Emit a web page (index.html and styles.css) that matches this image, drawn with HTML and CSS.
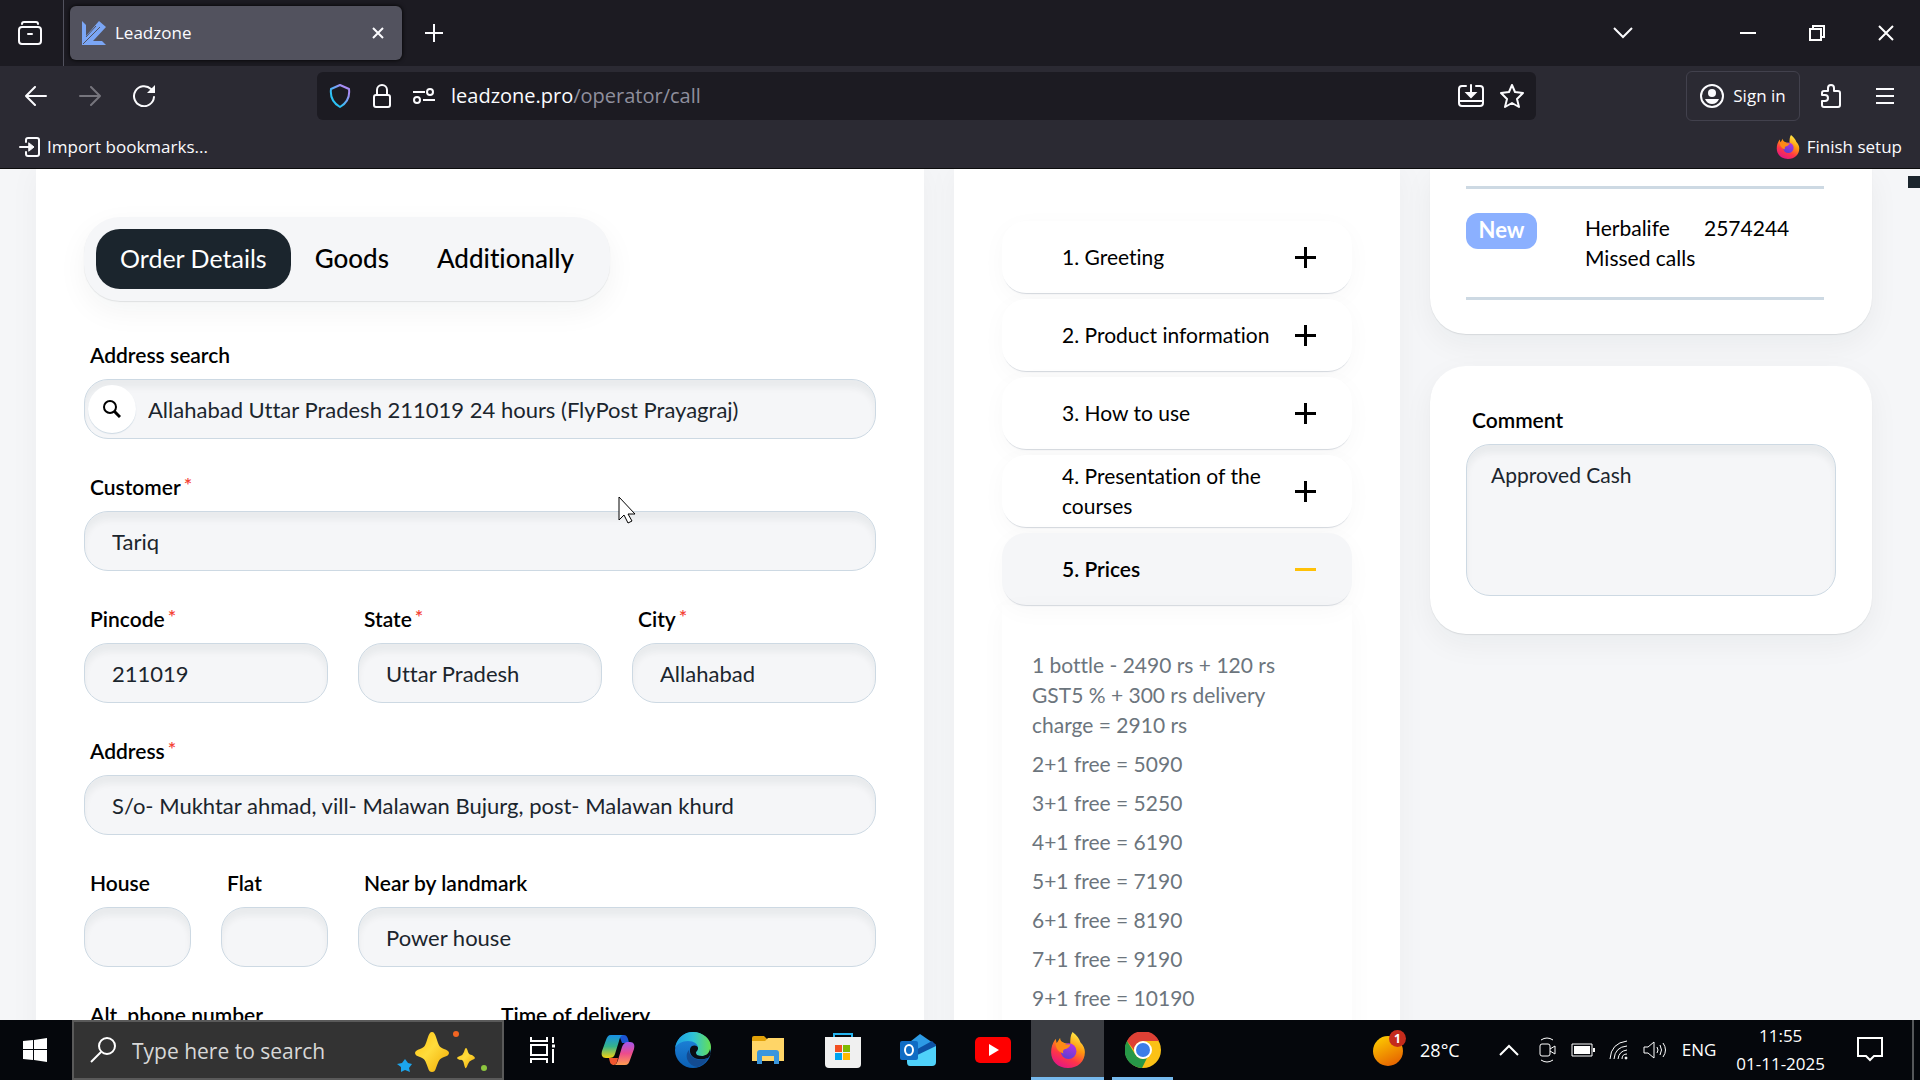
FILE: index.html
```html
<!DOCTYPE html>
<html lang="en">
<head>
    <meta charset="UTF-8">
    <meta name="viewport" content="width=device-width, initial-scale=1.0">
    <title>Leadzone</title>
    <link rel="stylesheet" href="styles.css">
</head>
<body>
    <!-- gradients shared by the two firefox logos -->
    <svg class="defs" width="0" height="0">
        <defs>
            <linearGradient id="foxBody" x1="0.8" y1="0" x2="0.3" y2="1">
                <stop offset="0" stop-color="#fff44f"/>
                <stop offset="0.4" stop-color="#ff980e"/>
                <stop offset="0.7" stop-color="#ff3647"/>
                <stop offset="1" stop-color="#e31587"/>
            </linearGradient>
            <linearGradient id="foxGlobe" x1="0.7" y1="0" x2="0.3" y2="1">
                <stop offset="0" stop-color="#b833e1"/>
                <stop offset="1" stop-color="#5b3fd0"/>
            </linearGradient>
            <symbol id="firefox" viewBox="0 0 32 32">
                <path fill="url(#foxBody)" d="M20 0c4 3 6 6 7 9 3 3 4 6 4 9 0 8-6 14-15 14S1 26 1 18c0-4 1-8 4-12l1 4 3-5c0 3 2 4 5 5l4 1c0-4 0-8 2-11z"/>
                <circle cx="16.500" cy="17" r="7" fill="url(#foxGlobe)"/>
                <path fill="#ff8a16" d="M5 10c4-2 7-1 9 1h4c0 2-2 3-4 4-2 0-3 2-2 4-4-1-7-4-7-9z"/>
            </symbol>
        </defs>
    </svg>

    <header class="browser">
        <div class="tab-strip">
            <button class="tab-button first" aria-label="Recent browsing">
                <svg width="24" height="26" viewBox="0 0 24 26" fill="none" stroke="#fbfbfe" stroke-width="2" stroke-linecap="round"><path d="M4 4c0-2 1-2 2-2h12c1 0 2 0 2 2"/><rect x="1" y="7" width="22" height="17" rx="3"/><path d="M10 14h4"/></svg>
            </button>
            <div class="tab">
                <svg width="24" height="26" viewBox="0 0 24 26"><path fill="#7ba6f5" d="M0 1l4 4v11L17 1l7 6-13 14h9l4 4H0z"/><path d="M1 24L18 7M4 17l10-11" stroke="#52525e" stroke-width="1" fill="none"/></svg>
                <span class="tab-title">Leadzone</span>
                <button class="tab-close" aria-label="Close tab">
                    <svg width="12" height="12" viewBox="0 0 12 12" stroke="#fbfbfe" stroke-width="2"><path d="M1 1l10 10M11 1L1 11"/></svg>
                </button>
            </div>
            <button class="tab-button plus" aria-label="New tab">
                <svg width="18" height="18" viewBox="0 0 18 18" stroke="#fbfbfe" stroke-width="2"><path d="M9 0v18M0 9h18"/></svg>
            </button>
            <div class="window-buttons">
                <button class="all-tabs" aria-label="List all tabs"><svg width="20" height="12" viewBox="0 0 20 12" fill="none" stroke="#fbfbfe" stroke-width="2"><path d="M1 1l9 9 9-9"/></svg></button>
                <button aria-label="Minimize"><svg width="16" height="16" viewBox="0 0 16 16"><path d="M0 8h16" stroke="#fff" stroke-width="2"/></svg></button>
                <button aria-label="Restore"><svg width="16" height="16" viewBox="0 0 16 16" fill="none" stroke="#fff" stroke-width="2"><path d="M1 4h11v11H1z"/><path d="M4 4V1h11v11h-3"/></svg></button>
                <button aria-label="Close"><svg width="16" height="16" viewBox="0 0 16 16" stroke="#fff" stroke-width="2"><path d="M1 1l14 14M15 1L1 15"/></svg></button>
            </div>
        </div>

        <div class="toolbar">
            <button aria-label="Back"><svg width="22" height="20" viewBox="0 0 22 20" fill="none" stroke="#fbfbfe" stroke-width="2" stroke-linecap="round" stroke-linejoin="round"><path d="M21 10H1M10 1l-9 9 9 9"/></svg></button>
            <button aria-label="Forward" disabled><svg width="22" height="20" viewBox="0 0 22 20" fill="none" stroke="#76757d" stroke-width="2" stroke-linecap="round" stroke-linejoin="round"><path d="M1 10h20M12 1l9 9-9 9"/></svg></button>
            <button aria-label="Reload"><svg width="22" height="22" viewBox="0 0 22 22"><path d="M18 4a10 10 0 1 0 3 8" fill="none" stroke="#fbfbfe" stroke-width="2" stroke-linecap="round"/><path d="M22 0v8h-8z" fill="#fbfbfe"/></svg></button>
            <div class="url-bar">
                <div class="site-info">
                    <svg width="22" height="24" viewBox="0 0 22 24" fill="none" stroke-width="2" stroke-linejoin="round"><defs><linearGradient id="shield" x1="1" y1="0" x2="0" y2="1"><stop offset="0.200" stop-color="#a98cf5"/><stop offset="0.700" stop-color="#2bc2f5"/></linearGradient></defs><path stroke="url(#shield)" d="M11 1l9 4c1 8-2 14-9 18C4 19 1 13 2 5z"/></svg>
                    <svg width="18" height="24" viewBox="0 0 18 24" fill="none" stroke="#fbfbfe" stroke-width="2"><rect x="1" y="11" width="16" height="12" rx="2"/><path d="M4 11V6a5 5 0 0 1 10 0v5"/></svg>
                    <svg width="22" height="16" viewBox="0 0 22 16" fill="none" stroke="#fbfbfe" stroke-width="2"><path d="M0 4h12M10 12h12"/><circle cx="17" cy="4" r="3"/><circle cx="4" cy="12" r="3"/></svg>
                </div>
                <p class="url">leadzone.pro<span>/operator/call</span></p>
                <svg width="26" height="24" viewBox="0 0 26 24" fill="none" stroke="#fbfbfe" stroke-width="2" stroke-linecap="round"><path d="M8 2H4a3 3 0 0 0-3 3v14a3 3 0 0 0 3 3h18a3 3 0 0 0 3-3V5a3 3 0 0 0-3-3h-4M1 17h24M13 1v11"/><path d="M9 9h8l-4 4z" fill="#fbfbfe"/></svg>
                <svg width="24" height="24" viewBox="0 0 24 24" fill="none" stroke="#fbfbfe" stroke-width="2" stroke-linejoin="round"><path d="M12 1l3 7 8 1-6 6 2 8-7-4-7 4 2-8-6-6 8-1z"/></svg>
            </div>
            <button class="sign-in">
                <svg width="24" height="24" viewBox="0 0 24 24"><circle cx="12" cy="12" r="11" fill="none" stroke="#fbfbfe" stroke-width="2"/><circle cx="12" cy="9" r="4" fill="#fbfbfe"/><path d="M5 15h14c-1 3-4 5-7 5s-6-2-7-5z" fill="#fbfbfe"/></svg>
                Sign in
            </button>
            <button aria-label="Extensions"><svg width="20" height="24" viewBox="0 0 20 24" fill="none" stroke="#fbfbfe" stroke-width="2" stroke-linejoin="round"><path d="M3 7h4V4a3 3 0 0 1 6 0v3h4q2 0 2 2v12q0 2-2 2H3q-2 0-2-2v-4h3a3 3 0 0 0 0-6H1V9q0-2 2-2z"/></svg></button>
            <button aria-label="Menu"><svg width="18" height="16" viewBox="0 0 18 16" stroke="#fbfbfe" stroke-width="2"><path d="M0 1h18M0 8h18M0 15h18"/></svg></button>
        </div>

        <div class="bookmarks">
            <button>
                <svg width="21" height="20" viewBox="0 0 21 20" fill="none" stroke="#fbfbfe" stroke-width="2" stroke-linecap="round"><path d="M7 5V3q0-2 2-2h9q2 0 2 2v14q0 2-2 2H9q-2 0-2-2v-2M1 10h12"/><path d="M10 6l5 4-5 4z" fill="#fbfbfe" stroke-width="1"/></svg>
                Import bookmarks...
            </button>
            <button>
                <svg width="24" height="24"><use href="#firefox"/></svg>
                Finish setup
            </button>
        </div>
    </header>

    <main class="page">
        <section class="panel order">
            <nav class="tabs">
                <button class="active">Order Details</button>
                <button>Goods</button>
                <button>Additionally</button>
            </nav>
            <form class="order-form">
                <div class="field full">
                    <label for="search">Address search</label>
                    <div class="search-box">
                        <button type="button" class="search-button" aria-label="Search">
                            <svg width="18" height="18" viewBox="0 0 18 18" fill="none" stroke="#000" stroke-width="2"><circle cx="7" cy="7" r="6"/><path d="M11 11l6 6" stroke-width="3"/></svg>
                        </button>
                        <input type="text" id="search" value="Allahabad Uttar Pradesh 211019 24 hours (FlyPost Prayagraj)">
                    </div>
                </div>
                <div class="field full">
                    <label for="customer">Customer<sup>*</sup></label>
                    <input type="text" id="customer" value="Tariq">
                </div>
                <div class="field third">
                    <label for="pincode">Pincode<sup>*</sup></label>
                    <input type="text" id="pincode" value="211019">
                </div>
                <div class="field third">
                    <label for="state">State<sup>*</sup></label>
                    <input type="text" id="state" value="Uttar Pradesh">
                </div>
                <div class="field third">
                    <label for="city">City<sup>*</sup></label>
                    <input type="text" id="city" value="Allahabad">
                </div>
                <div class="field full">
                    <label for="address">Address<sup>*</sup></label>
                    <input type="text" id="address" value="S/o- Mukhtar ahmad, vill- Malawan Bujurg, post- Malawan khurd">
                </div>
                <div class="field sixth">
                    <label for="house">House</label>
                    <input type="text" id="house">
                </div>
                <div class="field sixth">
                    <label for="flat">Flat</label>
                    <input type="text" id="flat">
                </div>
                <div class="field wide">
                    <label for="landmark">Near by landmark</label>
                    <input type="text" id="landmark" value="Power house">
                </div>
                <div class="field half">
                    <label for="phone">Alt. phone number</label>
                    <input type="text" id="phone">
                </div>
                <div class="field half">
                    <label for="time">Time of delivery</label>
                    <input type="text" id="time">
                </div>
            </form>
        </section>

        <section class="panel script">
            <button class="step">1. Greeting <i class="plus-icon"></i></button>
            <button class="step">2. Product information <i class="plus-icon"></i></button>
            <button class="step">3. How to use <i class="plus-icon"></i></button>
            <button class="step">4. Presentation of the courses <i class="plus-icon"></i></button>
            <button class="step open">5. Prices <i class="plus-icon minus"></i></button>
            <div class="step-body">
                <p>1 bottle - 2490 rs + 120 rs GST5 % + 300 rs delivery charge = 2910 rs</p>
                <p>2+1 free = 5090</p>
                <p>3+1 free = 5250</p>
                <p>4+1 free = 6190</p>
                <p>5+1 free = 7190</p>
                <p>6+1 free = 8190</p>
                <p>7+1 free = 9190</p>
                <p>9+1 free = 10190</p>
            </div>
        </section>

        <aside class="side">
            <div class="card history">
                <div class="history-row">
                    <span class="badge">New</span>
                    <p>Herbalife</p>
                    <p>2574244</p>
                    <p class="status">Missed calls</p>
                </div>
            </div>
            <div class="card comment">
                <label for="comment">Comment</label>
                <textarea id="comment">Approved Cash</textarea>
            </div>
        </aside>

        <div class="scroll-mark"></div>
        <svg class="cursor" width="18" height="28" viewBox="0 0 18 28"><path d="M1 1v23l5-5 4 8 4-2-4-7h7z" fill="#fff" stroke="#000"/></svg>
    </main>

    <footer class="taskbar">
        <button class="start" aria-label="Start"><svg width="24" height="24" viewBox="0 0 24 24" fill="#fff"><path d="M0 3l10-1v9H0zM11 2l13-2v11H11zM0 12h10v10L0 21zM11 12h13v12l-13-2z"/></svg></button>
        <div class="task-search">
            <svg width="26" height="26" viewBox="0 0 26 26" fill="none" stroke="#fff" stroke-width="2"><circle cx="17" cy="9" r="8"/><path d="M11 15L1 25"/></svg>
            <input type="text" placeholder="Type here to search" aria-label="Type here to search">
            <svg width="92" height="44" viewBox="0 0 92 44">
                <defs><linearGradient id="spark" x1="0" y1="0" x2="1" y2="1"><stop offset="0" stop-color="#ffc20e"/><stop offset="0.450" stop-color="#ffdc3c"/><stop offset="1" stop-color="#f0a800"/></linearGradient></defs>
                <path fill="url(#spark)" d="M36 4c2 0 3 2 4 5 3 9 3 10 8 12 3 1 5 2 5 4s-2 3-5 4c-5 2-5 3-8 11-1 3-2 4-4 4s-3-1-4-4c-3-8-3-9-8-11-3-1-5-2-5-4s2-3 5-4c5-2 5-3 8-12 1-3 2-5 4-5z"/>
                <path fill="url(#spark)" d="M70 20q1 0 2 4 1 3 4 3 3 2 3 3t-3 2q-3 1-4 4t-2 4-2-4-4-4q-3-1-3-2t3-2q3-1 4-4 1-4 2-4z"/>
                <path fill="#1ca5ec" d="M9 31l3 4 4 1-3 4 1 4-5-2-4 2v-5l-4-3 5-1z"/>
                <circle cx="60" cy="6" r="3" fill="#f26522"/><circle cx="88" cy="40" r="3" fill="#8dc63f"/>
            </svg>
        </div>
        <button aria-label="Task view"><svg width="26" height="26" viewBox="0 0 26 26" fill="none" stroke="#fff" stroke-width="2"><path d="M1 0v4h16V0M1 8h16v10H1zM1 26v-4h16v4M23 0v6M23 12v14"/><path d="M22 9h3" stroke-width="3"/></svg></button>
        <button aria-label="Copilot"><svg width="34" height="32" viewBox="0 0 34 32">
            <defs><linearGradient id="copA" x1="0" y1="0" x2="0" y2="1"><stop offset="0" stop-color="#1890e8"/><stop offset="0.500" stop-color="#35b48b"/><stop offset="1" stop-color="#f5d211"/></linearGradient><linearGradient id="copB" x1="0" y1="0" x2="0" y2="1"><stop offset="0" stop-color="#a456ee"/><stop offset="0.500" stop-color="#ed4c8c"/><stop offset="1" stop-color="#ff9d50"/></linearGradient></defs>
            <path fill="#1b55d3" d="M18 1h5c3 0 4 3 5 8h-7z"/>
            <path fill="url(#copA)" d="M10 1h13c-3 0-4 2-5 6l-4 13c-1 3-3 4-6 4H5c-4 0-5-3-4-7L5 6c1-3 2-5 5-5z"/>
            <path fill="url(#copB)" d="M24 31H12c3 0 4-2 5-5l4-13c1-3 3-5 6-5h2c4 0 5 3 4 7l-4 11c-1 3-2 5-5 5z"/>
            <path fill="#f2562f" d="M9 24h8c-1 5-2 7-5 7-3-1-3-3-4-7z"/></svg></button>
        <button aria-label="Edge"><svg width="36" height="36" viewBox="0 0 36 36">
            <defs><linearGradient id="edgeA" x1="0" y1="0" x2="1" y2="0"><stop offset="0" stop-color="#1b9de2"/><stop offset="0.500" stop-color="#2fc1d8"/><stop offset="1" stop-color="#66e052"/></linearGradient><linearGradient id="edgeB" x1="0" y1="0" x2="0" y2="1"><stop offset="0" stop-color="#2089df"/><stop offset="1" stop-color="#0b5fb4"/></linearGradient></defs>
            <circle cx="18" cy="18" r="18" fill="url(#edgeB)"/>
            <path fill="url(#edgeA)" d="M0 16C2 6 9 0 18 0c10 0 18 7 18 15 0 6-4 9-9 9-4 0-6-1-6-3s2-2 2-5c0-4-4-7-10-7S2 12 0 16z"/>
            <path fill="#0a0d14" d="M15 17c-1 7 6 13 18 9l3-4-1-5c-1 5-5 7-8 7-4 0-6-1-6-3s2-2 2-5c0-3-7-4-8 1z"/>
            <path fill="#134b91" d="M14 18c-5 5-2 16 9 17 5-2 8-5 10-9-10 4-19 0-19-8z"/></svg></button>
        <button aria-label="File Explorer"><svg width="32" height="28" viewBox="0 0 32 28"><path fill="#e2a109" d="M0 2q0-2 2-2h10l3 3v4H0z"/><path fill="#ffd567" d="M0 5h13l3-3h16v23H0z"/><path fill="#3a96dd" d="M5 28V17q0-3 3-3h16q3 0 3 3v11h-5v-8H10v8z"/></svg></button>
        <button aria-label="Microsoft Store"><svg width="36" height="36" viewBox="0 0 36 36"><path d="M9 7V2h18v5" fill="none" stroke="#25b5f0" stroke-width="2"/><path fill="#f0f0f0" d="M0 5h36v27q0 4-4 4H4q-4 0-4-4z"/><path fill="#f25022" d="M10 13h7v7h-7z"/><path fill="#7fba00" d="M18 13h7v7h-7z"/><path fill="#00a4ef" d="M10 21h7v7h-7z"/><path fill="#ffb900" d="M18 21h7v7h-7z"/></svg></button>
        <button aria-label="Outlook"><svg width="36" height="32" viewBox="0 0 36 32"><path fill="#2d9be5" d="M6 11L20 0l16 11v9H6z"/><path fill="#0d52a5" d="M12 18L32 7l4 4v4L18 26z"/><path fill="#4fd1fa" d="M7 26l29-14v16q0 4-4 4H10q-3 0-3-4z"/><rect y="7" width="18" height="19" rx="2" fill="#0f6cc4"/><ellipse cx="9" cy="16" rx="4" ry="5" fill="none" stroke="#fff" stroke-width="2"/></svg></button>
        <button aria-label="YouTube"><svg width="36" height="26" viewBox="0 0 36 26"><rect width="36" height="26" rx="5" fill="#f00"/><path fill="#fff" d="M14 7l10 6-10 6z"/></svg></button>
        <button class="current" aria-label="Firefox"><svg width="36" height="36"><use href="#firefox"/></svg></button>
        <button class="running" aria-label="Chrome"><svg width="36" height="36" viewBox="0 0 36 36"><circle cx="18" cy="18" r="18" fill="#fbc116"/><path fill="#dd4035" d="M2 9a18 18 0 0 1 32 0H18a9 9 0 0 0-9 9z"/><path fill="#279847" d="M2 9l8 13a9 9 0 0 0 12 4l-5 10A18 18 0 0 1 2 9z"/><circle cx="18" cy="18" r="9" fill="#fff"/><circle cx="18" cy="18" r="7" fill="#3c7de8"/></svg></button>

        <div class="tray">
            <span class="weather"><svg width="34" height="34" viewBox="0 0 34 34"><defs><linearGradient id="sun" x1="0" y1="0" x2="0.500" y2="1"><stop offset="0" stop-color="#ffd400"/><stop offset="1" stop-color="#e86a00"/></linearGradient></defs><circle cx="16" cy="18" r="15" fill="url(#sun)"/></svg><b>1</b></span>
            <span class="temp">28°C</span>
            <svg class="tray-icon more" width="20" height="12" viewBox="0 0 20 12" fill="none" stroke="#fff" stroke-width="2"><path d="M1 11l9-9 9 9"/></svg>
            <svg class="tray-icon" width="18" height="28" viewBox="0 0 18 28" fill="none" stroke="#fff"><rect x="1" y="8" width="10" height="12" rx="2"/><path d="M11 13l5-3v8l-5-3M2 4q6-4 12 0M2 24q6 4 12 0"/></svg>
            <svg class="tray-icon" width="24" height="14" viewBox="0 0 24 14"><path d="M1 1h20v12H1z" fill="none" stroke="#fff"/><path d="M3 3h16v8H3zM22 5h2v4h-2z" fill="#fff"/></svg>
            <svg class="tray-icon" width="20" height="20" viewBox="0 0 20 20" fill="none" stroke="#fff"><path d="M1 19Q2 3 18 1M5 19Q6 7 18 6M9 19q1-8 9-9M13 19q0-5 5-5"/><circle cx="17" cy="18" r="1" fill="#fff"/></svg>
            <svg class="tray-icon" width="24" height="20" viewBox="0 0 24 20" fill="none" stroke="#fff"><path d="M1 7h4l6-5v16l-6-5H1zM14 7q2 3 0 6M17 5q3 5 0 10M20 3q5 7 0 14"/></svg>
            <span class="lang">ENG</span>
            <time class="clock">11:55<br>01-11-2025</time>
            <svg class="notify" width="26" height="26" viewBox="0 0 26 26" fill="none" stroke="#fff" stroke-width="2"><path d="M1 1h24v18h-8l-4 4-4-4H1z"/></svg>
        </div>
    </footer>
</body>
</html>
```
FILE: styles.css
```css
* {
    box-sizing: border-box;
}
body {
    display: flex;
    flex-direction: column;
    margin: 0;
    height: 100vh;
    overflow: hidden;
    font-family: Lato, sans-serif;
    font-size: 21px;
    line-height: 30px;
    font-variant-ligatures: none;
    color: #000;
    background-color: #f5f6f8;
}
p {
    margin: 0;
}
button {
    display: flex;
    align-items: center;
    justify-content: center;
    padding: 0;
    border: none;
    background: none;
    color: inherit;
    font: inherit;
    font-variant-ligatures: none;
    cursor: pointer;
}
svg {
    flex-shrink: 0;
}
.defs {
    position: absolute;
}

/* browser window */
.browser {
    color: #fbfbfe;
    background-color: #2b2a33;
    border-bottom: 1px solid #0c0c0d;
    font-family: "Open Sans", sans-serif;
    font-size: 17px;
    line-height: 24px;
}
.tab-strip {
    display: flex;
    align-items: center;
    height: 66px;
    background-color: #1c1b22;
}
.tab-button.first {
    width: 64px;
    height: 66px;
    padding-right: 4px;
    border-right: 1px solid #52525e;
}
.tab {
    display: flex;
    align-items: center;
    gap: 9px;
    width: 332px;
    height: 54px;
    margin-left: 6px;
    padding: 0 18px 0 12px;
    border-radius: 6px;
    background-color: #52525e;
    box-shadow: 0 0 4px #000;
}
.tab-title {
    flex: 1;
}
.tab-button.plus {
    width: 64px;
}
.window-buttons {
    display: flex;
    margin-left: auto;
}
.window-buttons button {
    width: 69px;
    height: 66px;
}
.window-buttons .all-tabs {
    margin-right: 56px;
}
.toolbar {
    display: flex;
    align-items: center;
    height: 60px;
    padding: 0 8px 0 9px;
}
.toolbar button {
    width: 54px;
    height: 50px;
}
.url-bar {
    display: flex;
    flex: 1;
    align-items: center;
    gap: 16px;
    height: 48px;
    margin: 0 150px 0 146px;
    padding: 0 12px;
    border-radius: 6px;
    background-color: #1c1b22;
}
.site-info {
    display: flex;
    align-items: center;
    gap: 22px;
}
.url {
    flex: 1;
    font-size: 20px;
}
.url span {
    color: #8f8f9d;
}
.toolbar .sign-in {
    width: 114px;
    margin-right: 4px;
    gap: 9px;
    border: 1px solid #42414d;
    border-radius: 6px;
}
.bookmarks {
    display: flex;
    justify-content: space-between;
    height: 42px;
    padding: 0 18px 0 19px;
}
.bookmarks button {
    gap: 7px;
}

/* page */
.page {
    position: relative;
    display: grid;
    grid-template-columns: 888fr 446fr 442fr;
    gap: 30px;
    flex: 1;
    min-height: 0;
    padding: 0 48px 0 36px;
    overflow: hidden;
}
.panel {
    padding: 48px 48px 0;
    background-color: #fff;
    box-shadow: 0 0 30px rgba(27, 37, 45, 0.04);
}
.tabs {
    display: flex;
    width: max-content;
    padding: 12px;
    border-radius: 36px;
    background-color: #f5f6f8;
    box-shadow: 0 1px 1px rgba(27, 37, 45, 0.1), 0 10px 30px rgba(27, 37, 45, 0.05);
}
.tabs button {
    height: 60px;
    padding: 0 24px 2px;
    border-radius: 24px;
    font-size: 26px;
    font-weight: 500;
}
.tabs .active {
    background-color: #1b252d;
    color: #fff;
    font-size: 25px;
    font-weight: 400;
}
.order-form {
    display: grid;
    grid-template-columns: repeat(12, 1fr);
    gap: 30px;
    margin-top: 36px;
}
.field {
    display: flex;
    flex-direction: column;
    gap: 7px;
}
.full {
    grid-column: span 12;
}
.wide {
    grid-column: span 8;
}
.half {
    grid-column: span 6;
}
.third {
    grid-column: span 4;
}
.sixth {
    grid-column: span 2;
}
label {
    padding-left: 6px;
    font-weight: 600;
    line-height: 35px;
}
sup {
    margin-left: 3px;
    color: #f44336;
    font-size: 20px;
    line-height: 1px;
    vertical-align: 3px;
}
input, textarea {
    width: 100%;
    border: 1px solid #cdd9e3;
    border-radius: 24px;
    background-color: #f5f6f8;
    box-shadow: inset 0 8px 6px rgba(27, 37, 45, 0.05);
    color: #1b252d;
    font: inherit;
    font-variant-ligatures: none;
}
input {
    height: 60px;
    padding: 0 27px;
    font-size: 22px;
}
.search-box {
    position: relative;
}
.search-box input {
    padding-left: 63px;
}
/* round button sits on the left end of the input */
.search-button {
    position: absolute;
    top: 6px;
    left: 4px;
    width: 48px;
    height: 48px;
    border-radius: 50%;
    background-color: #fff;
    box-shadow: 0 1px 1px #cdd9e3;
}
.script {
    padding-top: 52px;
}
.step {
    justify-content: space-between;
    width: 100%;
    height: 72px;
    margin-bottom: 6px;
    padding: 0 36px 0 60px;
    border-radius: 24px;
    background-color: #fff;
    box-shadow: 0 2px 1px -1px rgba(60, 80, 110, 0.2), 0 6px 24px rgba(27, 37, 45, 0.03);
    text-align: left;
}
.step.open {
    margin-bottom: 0;
    background-color: #f5f6f8;
    font-weight: 600;
}
.plus-icon {
    flex-shrink: 0;
    width: 21px;
    height: 21px;
    background: linear-gradient(#000, #000) center / 21px 3px no-repeat, linear-gradient(#000, #000) center / 3px 21px no-repeat;
}
.plus-icon.minus {
    background: linear-gradient(#ffc107, #ffc107) center / 21px 3px no-repeat;
}
.step-body {
    height: 500px;
    padding: 45px 30px;
    color: #6c757d;
    box-shadow: 0 6px 24px rgba(27, 37, 45, 0.03);
}
.step-body p {
    margin-bottom: 9px;
}
.card {
    border-radius: 36px;
    background-color: #fff;
    box-shadow: 0 1px 1px rgba(27, 37, 45, 0.1), 0 10px 30px rgba(27, 37, 45, 0.05);
}
.history {
    margin-bottom: 32px;
    padding: 17px 48px 34px 36px;
    border-top-left-radius: 0;
    border-top-right-radius: 0;
}
.history-row {
    display: grid;
    grid-template-columns: 119px 119px 1fr;
    padding: 24px 0;
    border-top: 3px solid #cdd9e3;
    border-bottom: 3px solid #cdd9e3;
}
.history-row .status {
    grid-column: 2 / 4;
}
.badge {
    width: 71px;
    height: 36px;
    grid-row: span 2;
    border-radius: 12px;
    background-color: #8bb0ff;
    color: #fff;
    font-size: 22px;
    font-weight: 700;
    line-height: 34px;
    text-align: center;
}
.comment {
    display: flex;
    flex-direction: column;
    gap: 7px;
    padding: 36px 36px 38px;
}
textarea {
    height: 152px;
    padding: 15px 24px;
    resize: none;
}
.scroll-mark {
    position: absolute;
    top: 7px;
    right: 0;
    width: 12px;
    height: 12px;
    background-color: #1b252d;
}
.cursor {
    position: absolute;
    top: 327px;
    left: 618px;
}

/* windows taskbar */
.taskbar {
    display: flex;
    gap: 2px;
    height: 60px;
    background-color: #05070c;
    color: #fff;
    font-family: "Open Sans", sans-serif;
    font-size: 18px;
    line-height: 28px;
}
.taskbar button {
    width: 73px;
}
.taskbar .start {
    width: 70px;
}
.task-search {
    display: flex;
    align-items: center;
    width: 432px;
    padding: 0 14px 0 16px;
    border: 2px solid #5a5a5a;
    background-color: #333;
}
.task-search input {
    flex: 1;
    min-width: 0;
    height: 50px;
    padding: 2px 16px 0;
    border: none;
    background: none;
    box-shadow: none;
    font-size: 21px;
}
.task-search input::placeholder {
    color: #d8d8d8;
    opacity: 1;
}
.taskbar .current {
    background-color: #3b3d42;
    box-shadow: inset 0 -3px #76b9ed;
}
.taskbar .running {
    background: linear-gradient(#76b9ed, #76b9ed) center bottom / 61px 3px no-repeat;
}
.tray {
    display: flex;
    align-items: center;
    margin-left: auto;
    margin-right: 6px;
    padding-right: 29px;
    border-right: 2px solid #55575a;
}
.weather {
    position: relative;
    height: 34px;
    margin-right: 14px;
}
.weather b {
    position: absolute;
    top: -3px;
    right: 0;
    width: 17px;
    height: 17px;
    border-radius: 50%;
    background-color: #c42b1c;
    font-size: 12px;
    line-height: 17px;
    text-align: center;
}
.temp {
    margin-right: 32px;
}
.tray-icon {
    margin: 0 7px;
}
.tray-icon.more {
    margin-right: 13px;
}
.lang {
    margin: 0 20px 0 8px;
    font-size: 17px;
}
.clock {
    margin-right: 32px;
    font-size: 17px;
    text-align: center;
}
```
